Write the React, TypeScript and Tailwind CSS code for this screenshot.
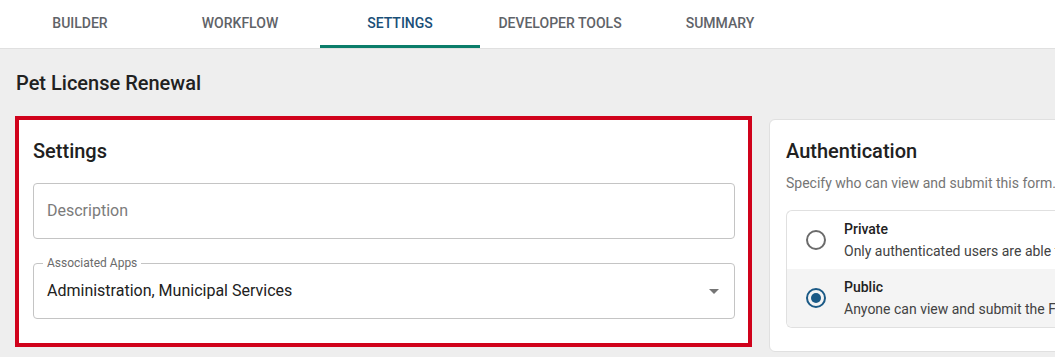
import React from "react";

const tabs = ["BUILDER", "WORKFLOW", "SETTINGS", "DEVELOPER TOOLS", "SUMMARY"];

function Radio({ checked }: { checked: boolean }) {
  return checked ? (
    <span className="flex h-[20px] w-[20px] shrink-0 items-center justify-center rounded-full border-2 border-[#1b5a86]">
      <span className="h-[10px] w-[10px] rounded-full bg-[#1b5a86]" />
    </span>
  ) : (
    <span className="h-[20px] w-[20px] shrink-0 rounded-full border-2 border-[#6b6b6b]" />
  );
}

export default function App() {
  return (
    <div
      className="flex h-[357px] w-[1055px] flex-col overflow-hidden bg-[#eeeeee]"
      style={{ fontFamily: "Roboto, 'Liberation Sans', sans-serif" }}
    >
      <div className="flex h-[49px] shrink-0 border-b border-[#e0e0e0] bg-white">
        {tabs.map((t) => {
          const active = t === "SETTINGS";
          return (
            <div
              key={t}
              className={`relative flex h-[48px] w-[160px] items-center justify-center pb-[3px] text-[14px] font-medium leading-[20px] ${
                active ? "text-[#1a4f78]" : "text-[#5f6368]"
              }`}
            >
              {t}
              {active && <span className="absolute bottom-0 left-0 h-[3px] w-full bg-[#0b7d6a]" />}
            </div>
          );
        })}
      </div>

      <div className="flex flex-col px-[15px] pt-[20px]">
        <h1 className="pl-[1px] text-[20px] font-medium leading-[28px] text-[#212121]">Pet License Renewal</h1>

        <div className="mt-[19px] flex items-start gap-[17px]">
          <div className="h-[231px] w-[737px] shrink-0 border-4 border-[#d0021b] bg-white pl-[14px] pr-[13px] pt-[17px]">
            <h2 className="text-[20px] font-medium leading-[28px] text-[#212121]">Settings</h2>
            <div className="mt-[18px] flex h-[56px] items-center rounded-[4px] border border-[#c4c4c4] px-[13px] text-[16px] text-[#7b7b7b]">
              Description
            </div>
            <div className="relative mt-[24px] flex h-[56px] items-center justify-between rounded-[4px] border border-[#c4c4c4] pl-[13px] pr-[13px] text-[16px] text-[#212121]">
              <span className="absolute left-[9px] top-[-9px] bg-white px-[4px] text-[12px] leading-[16px] text-[#6b6b6b]">
                Associated Apps
              </span>
              <span>Administration, Municipal Services</span>
              <svg width="24" height="24" viewBox="0 0 24 24" className="mr-[-5px]">
                <path d="M7 10l5 5 5-5z" fill="#757575" />
              </svg>
            </div>
          </div>

          <div className="mt-[3px] h-[233px] w-[340px] shrink-0 rounded-[6px] border border-[#e0e0e0] bg-white pl-[16px] pt-[17px]">
            <h2 className="text-[20px] font-medium leading-[28px] text-[#212121]">Authentication</h2>
            <p className="mt-[8px] text-[14px] leading-[20px] text-[#757575]">
              Specify who can view and submit this form.
            </p>
            <div className="mt-[17px] overflow-hidden rounded-l-[6px] border border-r-0 border-[#e0e0e0]">
              <div className="flex items-center gap-[18px] py-[7px] pl-[19px] text-[14px] leading-[22px]">
                <Radio checked={false} />
                <div className="whitespace-nowrap">
                  <div className="font-medium text-[#212121]">Private</div>
                  <div className="text-[#424242]">Only authenticated users are able to view and submit the Form.</div>
                </div>
              </div>
              <div className="flex items-center gap-[18px] bg-[#f4f4f4] py-[7px] pl-[19px] text-[14px] leading-[22px]">
                <Radio checked={true} />
                <div className="whitespace-nowrap">
                  <div className="font-medium text-[#212121]">Public</div>
                  <div className="text-[#424242]">Anyone can view and submit the Form.</div>
                </div>
              </div>
            </div>
          </div>
        </div>
      </div>
    </div>
  );
}
